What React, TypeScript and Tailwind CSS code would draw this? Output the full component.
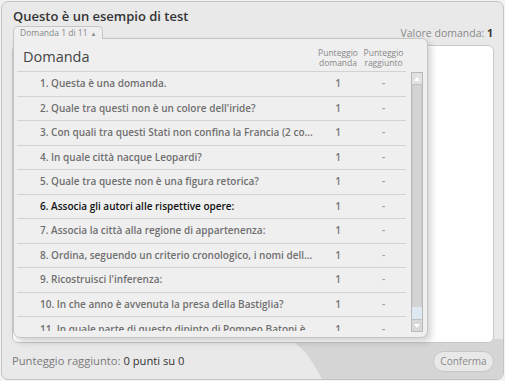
import React from "react";

const rows = [
  "1. Questa è una domanda.",
  "2. Quale tra questi non è un colore dell'iride?",
  "3. Con quali tra questi Stati non confina la Francia (2 co...",
  "4. In quale città nacque Leopardi?",
  "5. Quale tra queste non è una figura retorica?",
  "6. Associa gli autori alle rispettive opere:",
  "7. Associa la città alla regione di appartenenza:",
  "8. Ordina, seguendo un criterio cronologico, i nomi dell...",
  "9. Ricostruisci l'inferenza:",
  "10. In che anno è avvenuta la presa della Bastiglia?",
  "11. In quale parte di questo dipinto di Pompeo Batoni è",
];

export default function App() {
  return (
    <div
      className="w-[505px] h-[381px] bg-[#f2f2f2] p-[1px]"
      style={{ fontFamily: '"Open Sans", "DejaVu Sans", sans-serif' }}
    >
      <div className="relative h-full rounded-[7px] border border-[#c4c4c4] bg-[#e9e9e9] overflow-hidden flex flex-col">
        <svg className="absolute left-0 bottom-0" width="503" height="40" viewBox="0 0 503 40">
          <path d="M281,0 C298,2 308,18 320,40 L503,40 L503,0 Z" fill="#d5d5d5" />
        </svg>

        <div className="relative pl-[11px] pt-[4px] h-[24px] text-[13px] leading-[20px] font-semibold text-[#333]">
          Questo è un esempio di test
        </div>

        <div className="relative flex items-end justify-between pl-[11px] pr-[10px] h-[12px]">
          <div className="h-[13px] w-[90px] rounded-t-[5px] border border-b-0 border-[#c6c6c6] bg-[#efefef] pl-[6px] text-[8.5px] leading-[12px] text-[#888] relative z-20 mb-[-1px] whitespace-nowrap">
            Domanda 1 di 11 <span className="ml-[2px] text-[7px]">▴</span>
          </div>
          <div className="text-[10.5px] leading-[12px] text-[#8a8a8a] translate-y-[1px]">
            Valore domanda: <span className="font-bold text-[#333]">1</span>
          </div>
        </div>

        <div className="relative ml-[10px] mr-[9px]">
          <div className="mt-[7px] h-[298px] rounded-[6px] border border-[#c8c8c8] bg-white" />

          <div className="absolute left-[1px] top-0 w-[415px] h-[300px] rounded-b-[7px] rounded-tr-[6px] border border-[#c6c6c6] bg-[#efefef] shadow-[3px_4px_7px_rgba(0,0,0,0.18)] z-10 flex flex-col pl-[3px] pr-[4px]">
            <div className="flex h-[33px] items-end pb-[3px] border-b border-[#d2d2d2] mr-[17px] shrink-0">
              <div className="flex-1 pl-[6px] text-[14.5px] leading-[22px] text-[#444]">Domanda</div>
              <div className="w-[46px] text-center text-[8.5px] leading-[9.5px] text-[#888] pb-[1px]">
                Punteggio<br />domanda
              </div>
              <div className="w-[45px] text-center text-[8.5px] leading-[9.5px] text-[#888] pb-[1px]">
                Punteggio<br />raggiunto
              </div>
            </div>

            <div className="flex flex-1 min-h-0 pb-[6px]">
              <div className="flex-1 min-w-0 overflow-hidden">
                {rows.map((r, i) => (
                  <div
                    key={i}
                    className={`flex items-center h-[24.5px] ${i < rows.length - 1 ? "border-b border-[#d2d2d2]" : ""} text-[10px] font-semibold`}
                  >
                    <div
                      className={`flex-1 min-w-0 pl-[23px] whitespace-nowrap overflow-hidden ${i === 5 ? "text-[#111]" : "text-[#6f6f6f]"}`}
                    >
                      {r}
                    </div>
                    <div className="w-[46px] text-center text-[#777]">1</div>
                    <div className="w-[45px] text-center text-[#999]">-</div>
                  </div>
                ))}
              </div>
              <div className="ml-[5px] w-[12px] h-[260px] border border-[#b9b9b9] bg-[#cbcbcb] flex flex-col">
                <div className="h-[12px] bg-[#e2e2e2] border-b border-[#c0c0c0] flex items-center justify-center">
                  <svg width="6" height="4" viewBox="0 0 6 4"><path d="M3 0 L6 4 L0 4 Z" fill="#fff" /></svg>
                </div>
                <div className="flex-1 mx-[1px] bg-[#d3d3d3]" />
                <div className="h-[12px] bg-[#dde8f2]" />
                <div className="h-[12px] bg-[#d8d8d8] border-t border-[#c0c0c0] flex items-center justify-center">
                  <svg width="6" height="4" viewBox="0 0 6 4"><path d="M0 0 L6 0 L3 4 Z" fill="#fff" /></svg>
                </div>
              </div>
            </div>
          </div>
        </div>

        <div className="relative flex flex-1 items-center justify-between pl-[10px] pr-[9px] pt-[1px]">
          <div className="text-[11.2px] text-[#7a7a7a]">
            Punteggio raggiunto: <span className="text-[#333]">0 punti su 0</span>
          </div>
          <div className="h-[21px] w-[61px] rounded-full border border-[#c6c6c6] bg-[#e8e8e8] flex items-center justify-center text-[10px] text-[#8a8a8a]">
            Conferma
          </div>
        </div>
      </div>
    </div>
  );
}
